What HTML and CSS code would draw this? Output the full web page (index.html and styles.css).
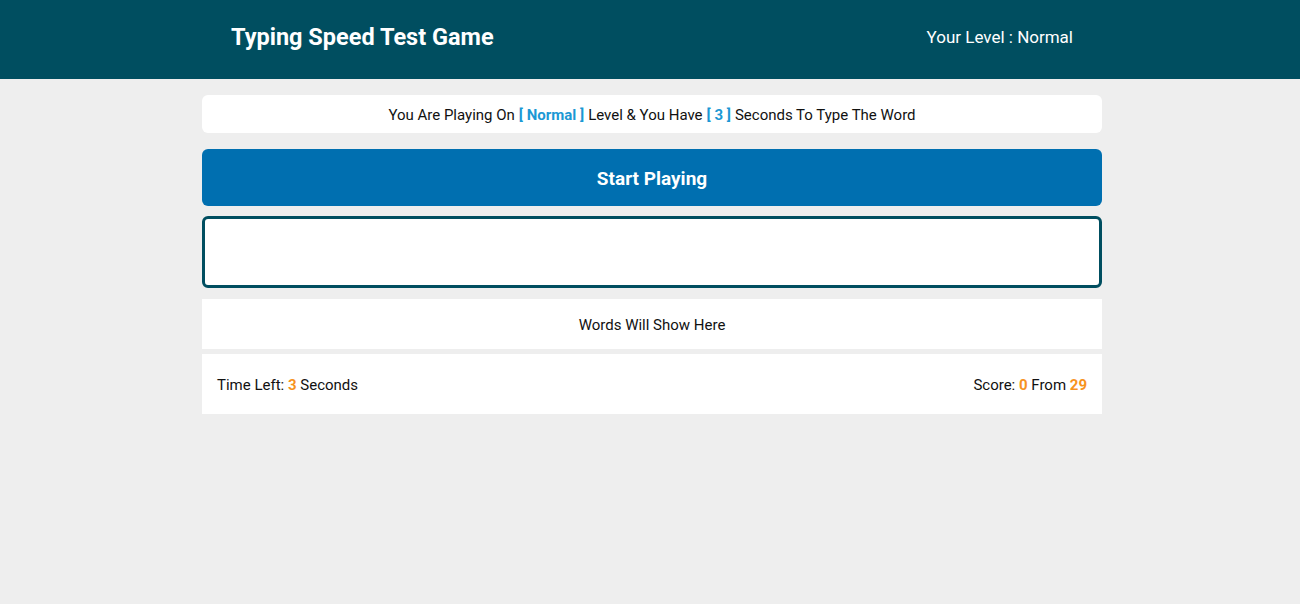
FILE: index.html
```html
<!DOCTYPE html>
<html lang="en">
<head>
<meta charset="utf-8">
<title>Typing Speed Test Game</title>
<link rel="stylesheet" href="styles.css">
</head>
<body>
<header class="topbar">
  <div class="topbar-inner">
    <h1 class="game-title">Typing Speed Test Game</h1>
    <div class="your-level">Your Level : <span>Normal</span></div>
  </div>
</header>
<main class="game">
  <div class="message">You Are Playing On <span class="hl">[ Normal ]</span> Level &amp; You Have <span class="hl">[ 3 ]</span> Seconds To Type The Word</div>
  <button class="start">Start Playing</button>
  <input class="input" type="text" aria-label="Type the word">
  <div class="the-word">Words Will Show Here</div>
  <div class="control">
    <div class="time">Time Left: <span class="num">3</span> Seconds</div>
    <div class="score">Score: <span class="num">0</span> From <span class="num">29</span></div>
  </div>
</main>
</body>
</html>
```

FILE: styles.css
```css
* { box-sizing: border-box; }
body {
  margin: 0;
  padding-left: 4px;
  background: #eeeeee;
  font-family: Roboto, "Open Sans", sans-serif;
  color: #111;
}
.topbar {
  background: #004e60;
  height: 79px;
  margin-left: -4px;
  padding-left: 4px;
}
.topbar-inner {
  width: 900px;
  margin: 0 auto;
  height: 100%;
  padding: 0 29px;
  display: flex;
  align-items: center;
  justify-content: space-between;
  color: #fff;
}
.game-title {
  margin: 0;
  font-size: 23.5px;
  font-weight: 700;
  padding-bottom: 5px;
}
.your-level {
  font-size: 17px;
  padding-bottom: 6px;
}
.game {
  width: 900px;
  margin: 16px auto 0;
  display: flex;
  flex-direction: column;
}
.message {
  background: #fff;
  border-radius: 6px;
  height: 38px;
  padding-top: 2px;
  display: flex;
  align-items: center;
  justify-content: center;
  font-size: 15px;
}
.message .hl {
  color: #1b98d4;
  font-weight: 700;
  margin: 0 4px;
}
.start {
  margin-top: 16px;
  height: 57px;
  border: none;
  border-radius: 6px;
  background: #006fb0;
  color: #fff;
  font-family: inherit;
  font-size: 19px;
  font-weight: 700;
  padding: 2px 0 0;
}
.input {
  margin-top: 10px;
  height: 72px;
  border: 3px solid #004e60;
  border-radius: 6px;
  background: #fff;
  outline: none;
}
.the-word {
  margin-top: 11px;
  height: 50px;
  padding-top: 2px;
  background: #fff;
  display: flex;
  align-items: center;
  justify-content: center;
  font-size: 15px;
}
.control {
  margin-top: 5px;
  height: 60px;
  background: #fff;
  display: flex;
  align-items: center;
  justify-content: space-between;
  padding: 2px 15px 0;
  font-size: 15px;
}
.num {
  color: #f7931e;
  font-weight: 700;
}
```
